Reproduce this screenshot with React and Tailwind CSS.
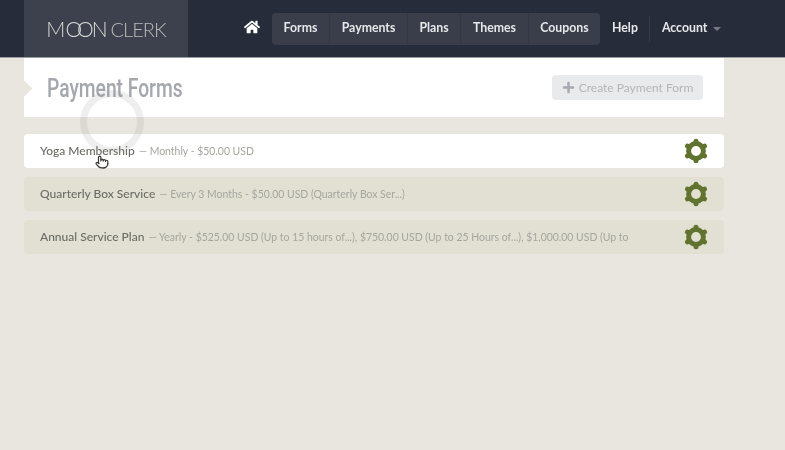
import { Pointer } from 'lucide-react';
import { FaHome, FaPlus } from 'react-icons/fa';

const navItems = [
  { label: 'Forms', w: 'w-[57px]' },
  { label: 'Payments', w: 'w-[78px]' },
  { label: 'Plans', w: 'w-[53px]' },
  { label: 'Themes', w: 'w-[68px]' },
  { label: 'Coupons', w: 'w-[72px]' },
];

const forms = [
  { name: 'Yoga Membership', detail: 'Monthly - $50.00 USD', active: true },
  { name: 'Quarterly Box Service', detail: 'Every 3 Months - $50.00 USD (Quarterly Box Ser...)' },
  { name: 'Annual Service Plan', detail: 'Yearly - $525.00 USD (Up to 15 hours of...), $750.00 USD (Up to 25 Hours of...), $1,000.00 USD (Up to' },
];

function Gear() {
  const spokes = [0, 60, 120, 180, 240, 300];
  return (
    <svg width="26" height="26" viewBox="0 0 26 26" className="shrink-0">
      {spokes.map((a) => (
        <line key={a} x1="13" y1="5" x2="13" y2="3.2" stroke="#61742f" strokeWidth="5" strokeLinecap="round" transform={`rotate(${a} 13 13)`} />
      ))}
      <circle cx="13" cy="13" r="7.4" fill="none" stroke="#61742f" strokeWidth="5" />
    </svg>
  );
}

function FormRow({ form }) {
  return (
    <div className={`flex items-center justify-between h-[34px] pl-4 pr-[15px] rounded-sm ${form.active ? 'bg-white' : 'bg-[#e1e0d3]'}`}>
      <div className="flex items-baseline text-[12px] whitespace-nowrap">
        <span className="font-medium text-[#6b6c66]">{form.name}</span>
        <span className="ml-1 text-[10.45px] text-[#a5a69e]">— {form.detail}</span>
      </div>
      <Gear />
    </div>
  );
}

export default function App() {
  return (
    <div className="relative h-[450px] overflow-hidden bg-[#e9e6df] font-['Lato','Open_Sans',sans-serif] blur-[0.6px]">
      <header className="flex h-[58px] bg-[#262c39] border-b border-[#9b9ca3] pl-6">
        <div className="flex w-[164px] items-center justify-center bg-[#3d414d] leading-none text-[#d9d9d6] font-light">
          <span className="text-[21px]">M</span>
          <span className="text-[21px] tracking-[-5px]">OO</span>
          <span className="ml-[3px] text-[21px]">N</span>
          <span className="ml-[3px] text-[20px] tracking-[-1px] text-[#b9b9b4]">CLERK</span>
        </div>

        <nav className="flex items-center pl-[56px] text-[12.3px] font-bold text-[#e6e7e9]">
          <FaHome className="-mt-1 mr-[12px] text-white" size={16} />
          <div className="flex h-[32px] rounded bg-[#3a3e4a]">
            {navItems.map((item, i) => (
              <a key={item.label} className={`flex items-center justify-center ${item.w} ${i ? 'border-l border-[#343844]' : ''}`}>
                {item.label}
              </a>
            ))}
          </div>
          <a className="ml-[12px] pr-[11px] border-r border-[#353a47] h-[26px] flex items-center">Help</a>
          <a className="ml-[12px] flex items-center">
            Account
            <span className="ml-[6px] mt-px border-x-[4px] border-t-[4px] border-x-transparent border-t-[#777a84]" />
          </a>
        </nav>
      </header>

      <main className="w-[700px] ml-6">
        <div className="relative flex h-[59px] items-center justify-between bg-white pl-[23px] pr-[21px]">
          <span className="absolute left-[-5px] top-[25px] h-[11px] w-[11px] rotate-45 bg-[#e9e6df]" />
          <h1 className="origin-left scale-x-[0.74] font-['Roboto',sans-serif] text-[26px] leading-none font-medium text-[#a4a7ad]">Payment Forms</h1>
          <button className="flex h-[25px] w-[151px] items-center justify-center gap-[4px] rounded-sm bg-[#e9eaec] text-[12px] text-[#b3b5bb]">
            <FaPlus size={13} className="text-[#a6a8ae]" />
            Create Payment Form
          </button>
        </div>

        <div className="mt-[17px] flex flex-col gap-[9px]">
          {forms.map((form) => (
            <FormRow key={form.name} form={form} />
          ))}
        </div>
      </main>

      {/* click ring and cursor from the recording */}
      <div className="absolute left-[80px] top-[90px] h-[64px] w-[64px] rounded-full border-[7px] border-[#8f8f8a]/15" />
      <Pointer className="absolute left-[95px] top-[155px] text-[#33352f] fill-white" size={14} strokeWidth={2} />
    </div>
  );
}
